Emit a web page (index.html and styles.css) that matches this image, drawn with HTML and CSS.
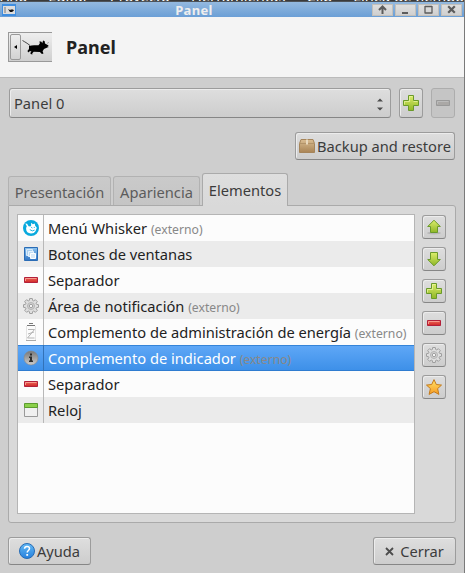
FILE: index.html
```html
<!DOCTYPE html>
<html lang="es">
<head>
<meta charset="utf-8">
<title>Panel</title>
<link rel="stylesheet" href="styles.css">
</head>
<body>
<svg class="defs" width="0" height="0" aria-hidden="true">
  <defs>
    <linearGradient id="green" x1="0" y1="0" x2="0" y2="1"><stop offset="0" stop-color="#dcee6c"/><stop offset="1" stop-color="#8fb626"/></linearGradient>
    <linearGradient id="red" x1="0" y1="0" x2="0" y2="1"><stop offset="0" stop-color="#ee6a5c"/><stop offset="1" stop-color="#cf2525"/></linearGradient>
    <linearGradient id="blue" x1="0" y1="0" x2="0" y2="1"><stop offset="0" stop-color="#64baf5"/><stop offset="1" stop-color="#2680dd"/></linearGradient>
    <linearGradient id="win" x1="0" y1="0" x2="0" y2="1"><stop offset="0" stop-color="#8ec4ef"/><stop offset="1" stop-color="#2f74c4"/></linearGradient>
    <linearGradient id="gray" x1="0" y1="0" x2="0" y2="1"><stop offset="0" stop-color="#777"/><stop offset="1" stop-color="#ccc"/></linearGradient>
    <linearGradient id="gold" x1="0" y1="0" x2="0" y2="1"><stop offset="0" stop-color="#ffe36a"/><stop offset="1" stop-color="#f79a20"/></linearGradient>
    <linearGradient id="box" x1="0" y1="0" x2="0" y2="1"><stop offset="0" stop-color="#d9bd92"/><stop offset="1" stop-color="#a98455"/></linearGradient>
    <symbol id="i-plus" viewBox="0 0 16 16"><path d="M5.500.5h5v5h5v5h-5v5h-5v-5h-5v-5h5z" fill="url(#green)" stroke="#6a9a2a"/><path d="M6.500 6.500V1.500h3M1.500 9.500v-3h5M10.500 6.500h4" fill="none" stroke="#eef7a8" stroke-opacity=".7"/></symbol>
    <symbol id="i-minus" viewBox="0 0 16 16"><path d="M1.500 5.500h13v5h-13z" fill="url(#red)" stroke="#b2203a"/><path d="M2.500 9V6.500h11" fill="none" stroke="#f79a8c"/></symbol>
    <symbol id="i-minus-off" viewBox="0 0 16 16"><path d="M1.500 5.500h13v5h-13z" fill="#aaa8a6" stroke="#999"/><path d="M2.500 9V6.500h11" fill="none" stroke="#bbb"/></symbol>
    <symbol id="i-up" viewBox="0 0 16 16"><ellipse cx="8" cy="14" rx="7" ry="1.500" fill="#000" opacity=".12"/><path d="M8 1.200l6.300 6.300h-2.800v6h-7v-6H1.700z" fill="url(#green)" stroke="#6a9a2a"/></symbol>
    <symbol id="i-down" viewBox="0 0 16 16"><path d="M8 14.800L1.700 8.500h2.800v-7h7v7h2.800z" fill="url(#green)" stroke="#6a9a2a"/></symbol>
    <symbol id="i-gear" viewBox="0 0 16 16"><path d="M6.700.5h2.600l.4 2 1 .4 1.700-1.200 1.900 1.900-1.200 1.700.4 1 2 .4v2.600l-2 .4-.4 1 1.200 1.700-1.900 1.900-1.700-1.200-1 .4-.4 2H6.700l-.4-2-1-.4-1.700 1.200-1.900-1.900 1.200-1.700-.4-1-2-.4V6.700l2-.4.4-1-1.200-1.700 1.900-1.900 1.700 1.200 1-.4z" fill="#dedede" stroke="#999" stroke-width=".9"/><circle cx="8" cy="8" r="3.500" fill="#d2d2d2" stroke="#b5b5b5"/><circle cx="8" cy="8" r="1.700" fill="#f4f4f4" stroke="#999" stroke-width=".9"/></symbol>
    <symbol id="i-star" viewBox="0 0 16 16"><path d="M8 .6l2.300 4.900 5.200.6-3.900 3.500 1.300 5.800L8 12.700l-4.900 2.700 1.300-5.800L.5 6.100l5.200-.6z" fill="url(#gold)" stroke="#c47a1c" stroke-linejoin="round"/></symbol>
    <symbol id="i-whisker" viewBox="0 0 16 16"><circle cx="8" cy="8" r="8" fill="#08a9dd"/><path d="M2.300 3.600l1.800.2 1.500 2.400 1.800.2.800-1L8 2.800l1.900 1.400 1.800-.6.500 2.100 1.600 2.100-1.200 3.200c-1 1.700-2.500 2.500-4.600 2.500-3 0-4.900-1.900-4.900-4.700 0-1 .2-1.800.7-2.600z" fill="#fff"/><path d="M8.200 7.300l1.200.7M11.300 6.900v1M6.800 9.600l2.500 1.300 2.300-.8" stroke="#08a9dd" stroke-width=".9" fill="none"/></symbol>
    <symbol id="i-windows" viewBox="0 0 16 16"><path d="M1.500 1.500h13v13h-13z" fill="url(#win)" stroke="#2b6cb5"/><path d="M3.500 3.500h6v6h-6z" fill="#a9ceee" stroke="#d7eafa"/><path d="M5.500 5.500h5v5h-5z" fill="#c0dcf4" stroke="#e7f3fc"/><path d="M7.500 7.500h5v5h-5z" fill="#dcebf8" stroke="#fff"/></symbol>
    <symbol id="i-power" viewBox="0 0 16 20"><path d="M6 1.500h4M4 3.500h8" stroke="#777" fill="none"/><path d="M3.500 4v14M12.500 4v14" stroke="#e3e3e3"/><path d="M5 7.500h6.500L4.500 16h7M5 12l6-2" fill="none" stroke="#b5b5b5"/><path d="M3 18.500h10" stroke="#aaa"/></symbol>
    <symbol id="i-info" viewBox="0 0 16 16"><circle cx="8" cy="8" r="7" fill="url(#gray)" stroke="#888" stroke-width=".6"/><path d="M7 3.500h2v2H7zM6 6.500h3v4h1v1.500H6v-1.500h1V8H6z" fill="#2d2d2d"/></symbol>
    <symbol id="i-clock" viewBox="0 0 16 16"><path d="M1.500 2.500h13v12h-13z" fill="#f0f0f0" stroke="#999"/><path d="M1.500 1.500h13v4h-13z" fill="#8bd04a" stroke="#5c9c30"/></symbol>
    <symbol id="i-box" viewBox="0 0 16 16"><path d="M2 1.500h12l1.500 4v9H.5v-9z" fill="url(#box)" stroke="#a5845a"/><path d="M.5 5.500h15" stroke="#b3946a"/><path d="M7 1.500h2v5H7z" fill="#e9d9bd"/></symbol>
    <symbol id="i-help" viewBox="0 0 16 16"><circle cx="8" cy="8" r="7.500" fill="url(#blue)" stroke="#276cb5"/><path d="M5.500 5.700C5.600 4.200 6.600 3.400 8 3.400s2.500.9 2.500 2.200c0 1.900-2.300 1.900-2.300 4" fill="none" stroke="#fff" stroke-width="1.500"/><path d="M7.300 11h1.800v1.800H7.300z" fill="#fff"/></symbol>
    <symbol id="i-mouse" viewBox="0 0 28 16"><path d="M.5 1.500C3 3 5 4 8 6.500" fill="none" stroke="#333" stroke-width=".9"/><path d="M7 7c3-1.200 6-.6 9.500-.8l1.300-1.700-.3-2.300 2 .6.700 1.400.9-2.800 1.600.8.3 2.300 3.500 2-.6 1.800-3.900 1.600-1.400 2.300.9 2.400-1.600.3-2-2-6.200-.1-1.600 1.600.7.900H9l-.7-1L9.400 12l-2.200.6-.8 1L5.400 12 7 10z" fill="#000"/><path d="M25 4.500l2-1.200M25 7.500l1.800.8" stroke="#777" stroke-width=".5"/></symbol>
  </defs>
</svg>
<div class="screen">
  <div class="backdrop"><span>Ano</span><span>Editar</span><span>Proyecto</span><span>Herramientas</span><span>Clip</span><span>Línea de tiempo</span></div>
  <div class="titlebar">
    <div class="mini"><svg width="12" height="8" viewBox="0 0 12 8"><path d="M0 0h12v8H0z" fill="#dedede"/><path d="M1 1h2v6H1z" fill="#aaa"/><path d="M5 3l2 1 1-.5h2l1 1L9 6H7z" fill="#111"/></svg></div>
    <div class="title">Panel</div>
    <div class="wbtns">
      <span class="wb"><svg width="9" height="9"><path d="M4.500 9V2M1 5l3.500-3.500L8 5" fill="none" stroke="#5c5c5c" stroke-width="2"/></svg></span>
      <span class="wb"><svg width="9" height="9"><path d="M1 7h6v2H1z" fill="#5c5c5c"/></svg></span>
      <span class="wb"><svg width="9" height="9"><path d="M1 1.500h7M1 8h7M1 1v7.500M8 1v7.500" stroke="#5c5c5c" fill="none" stroke-width="1.300"/></svg></span>
      <span class="wb"><svg width="9" height="9"><path d="M1.200 1.200l6.600 6.600M7.800 1.200L1.200 7.800" stroke="#5c5c5c" stroke-width="2.200"/></svg></span>
    </div>
  </div>
  <header class="header">
    <div class="logo"><span class="logo-arrow"></span><svg width="28" height="16"><use href="#i-mouse"/></svg></div>
    <h1>Panel</h1>
  </header>
  <main>
    <div class="selector">
      <div class="btn combo"><span>Panel 0</span><svg width="6" height="13"><path d="M0 3.500L3 .5l3 3zM0 9.500h6l-3 3z" fill="#4c4c4c"/></svg></div>
      <div class="btn tall"><svg width="16" height="16"><use href="#i-plus"/></svg></div>
      <div class="btn tall off"><svg width="16" height="16"><use href="#i-minus-off"/></svg></div>
    </div>
    <div class="backup-row"><div class="btn backup"><svg width="16" height="16"><use href="#i-box"/></svg><span>Backup and restore</span></div></div>
    <div class="tabs">
      <div class="tab t1">Presentación</div><div class="tab t2">Apariencia</div><div class="tab active">Elementos</div>
    </div>
    <section class="page">
      <div class="list">
        <div class="row"><i><svg width="16" height="16"><use href="#i-whisker"/></svg></i><span>Menú Whisker <small>(externo)</small></span></div>
        <div class="row"><i><svg width="16" height="16"><use href="#i-windows"/></svg></i><span>Botones de ventanas</span></div>
        <div class="row"><i><svg width="16" height="16"><use href="#i-minus"/></svg></i><span>Separador</span></div>
        <div class="row"><i><svg width="16" height="16"><use href="#i-gear"/></svg></i><span>Área de notificación <small>(externo)</small></span></div>
        <div class="row"><i><svg width="16" height="20"><use href="#i-power"/></svg></i><span>Complemento de administración de energía <small>(externo)</small></span></div>
        <div class="row sel"><i><svg width="16" height="16"><use href="#i-info"/></svg></i><span>Complemento de indicador <small>(externo)</small></span></div>
        <div class="row"><i><svg width="16" height="16"><use href="#i-minus"/></svg></i><span>Separador</span></div>
        <div class="row"><i><svg width="16" height="16"><use href="#i-clock"/></svg></i><span>Reloj</span></div>
      </div>
      <div class="tools">
        <div class="btn"><svg width="16" height="16"><use href="#i-up"/></svg></div>
        <div class="btn"><svg width="16" height="16"><use href="#i-down"/></svg></div>
        <div class="btn"><svg width="16" height="16"><use href="#i-plus"/></svg></div>
        <div class="btn"><svg width="16" height="16"><use href="#i-minus"/></svg></div>
        <div class="btn"><svg width="16" height="16"><use href="#i-gear"/></svg></div>
        <div class="btn"><svg width="16" height="16"><use href="#i-star"/></svg></div>
      </div>
    </section>
    <footer>
      <div class="btn help"><svg width="16" height="16"><use href="#i-help"/></svg><span>Ayuda</span></div>
      <div class="btn close"><svg width="9" height="9"><path d="M1 1l7 7M8 1L1 8" stroke="#4c4c4c" stroke-width="1.800"/></svg><span>Cerrar</span></div>
    </footer>
  </main>
</div>
</body>
</html>
```
FILE: styles.css
```css
* { box-sizing: border-box; }
body {
  margin: 0;
  overflow: hidden;
  font: 14.667px/20px "Noto Sans", "Open Sans", sans-serif;
  color: #3c3c3c;
  white-space: nowrap;
}
svg { display: block; flex: none; }
.defs { position: absolute; }
.screen {
  width: 465px;
  height: 573px;
  display: flex;
  flex-direction: column;
  background: #cecece;
  border-right: 1px solid #7a7a7a;
}
.backdrop {
  height: 2px;
  display: flex;
  gap: 21px;
  overflow: hidden;
  background: #3a3a3a;
  border-bottom: 1px solid #4d5359;
  color: #fff;
  line-height: 2px;
}
.backdrop span { margin-top: -5px; }
.titlebar {
  height: 15px;
  display: flex;
  align-items: center;
  background: linear-gradient(#94b9df, #6b9fd6);
}
.mini {
  width: 14px;
  height: 12px;
  margin-left: 2px;
  display: grid;
  place-items: center;
  background: #3f8ee0;
}
.title {
  flex: 1;
  text-align: center;
  color: #eee;
  font: bold 13px/14px "Noto Sans", sans-serif;
  letter-spacing: .35px;
}
.wbtns { display: flex; gap: 2px; margin-right: 2px; }
.wb {
  width: 21px;
  height: 12px;
  display: grid;
  place-items: center;
  background: linear-gradient(#dedede, #d0d0d0);
  border: 1px solid #c3c0bb;
}
.header {
  height: 61px;
  padding: 0 8px;
  display: flex;
  align-items: center;
  gap: 14px;
  background: #f4f4f4;
  border-bottom: 1px solid #bbb;
}
.header h1 { margin: 0; color: #222; font: bold 18px/24px "Noto Sans", sans-serif; }
.logo {
  width: 44px;
  height: 30px;
  padding-left: 1px;
  display: flex;
  align-items: center;
  gap: 1px;
  background: linear-gradient(#eee, #cfcfcf);
  border: 1px solid #999;
  border-right: 0;
}
.logo-arrow {
  width: 11px;
  height: 26px;
  display: grid;
  place-items: center;
  border: 1px solid #999;
  border-radius: 2px;
  background: linear-gradient(#eee, #d2d2d2);
}
.logo-arrow::before { content: ""; border: 2.5px solid transparent; border-left: 0; border-right: 3px solid #000; }
main { padding: 10px 8px 0; }
.btn {
  width: 24px;
  height: 24px;
  display: flex;
  align-items: center;
  justify-content: center;
  border: 1px solid #9c9c9c;
  border-bottom-color: #868686;
  border-radius: 3px;
  background: linear-gradient(#dedede, #cdcdcd);
  box-shadow: inset 1px 1px #ececec;
}
.selector { display: flex; gap: 8px; padding: 0 1px; }
.selector .btn { height: 30px; }
.selector .combo { width: 382px; padding: 0 7px 0 4px; justify-content: space-between; align-items: center; }
.combo svg { margin-top: 3px; }
.selector .off { background: #c5c5c5; border-color: #adadad; box-shadow: none; }
.backup-row { display: flex; justify-content: flex-end; padding: 14px 1px 0; }
.backup { width: 160px; height: 28px; gap: 2px; }
.tabs { display: flex; align-items: flex-end; gap: 2px; margin-top: 13px; height: 33px; }
.tab {
  height: 29px;
  margin-bottom: 1px;
  padding: 5px 0 0;
  text-align: center;
  color: #5c5c5c;
  border: 1px solid #b2b2b2;
  border-bottom: 0;
  border-radius: 3px 3px 0 0;
  background: linear-gradient(#cacaca, #c5c5c5);
}
.t1 { width: 103px; }
.t2 { width: 87px; }
.active {
  width: 86px;
  height: 33px;
  margin-bottom: 0;
  padding-top: 6px;
  z-index: 1;
  color: #3c3c3c;
  border-color: #aaa;
  background: linear-gradient(#dedede, #d9d9d9);
}
.page {
  width: 448px;
  height: 318px;
  margin-top: -1px;
  padding: 8px;
  display: flex;
  justify-content: space-between;
  border: 1px solid #aaa;
  border-radius: 0 3px 3px 3px;
  background: #d9d9d9;
}
.list { width: 398px; height: 300px; border: 1px solid #b5b5b5; background: #fcfcfc; color: #222; }
.row { height: 26px; display: flex; align-items: center; }
.row:nth-child(even) { background: #ebebeb; }
.row i { width: 26px; height: 26px; padding-left: 1px; display: grid; place-items: center; border-right: 1px solid #b8b8b8; }
.row span { height: 20px; padding-left: 4px; }
.row small { font-size: 12.2px; line-height: 1; color: #888; }
.row.sel {
  color: #fff;
  background: linear-gradient(#60a8f7, #3c8fe8);
  box-shadow: inset 0 1px #3584d8, inset 0 -1px #2f7cd0;
}
.sel i { border-color: #3272b8; }
.tools { display: flex; flex-direction: column; gap: 8px; padding: 1px 1px 0 0; }
footer { display: flex; justify-content: space-between; padding-top: 14px; }
footer .btn { width: 83px; height: 28px; }
.help { gap: 2px; }
.close { gap: 6px; }
```
